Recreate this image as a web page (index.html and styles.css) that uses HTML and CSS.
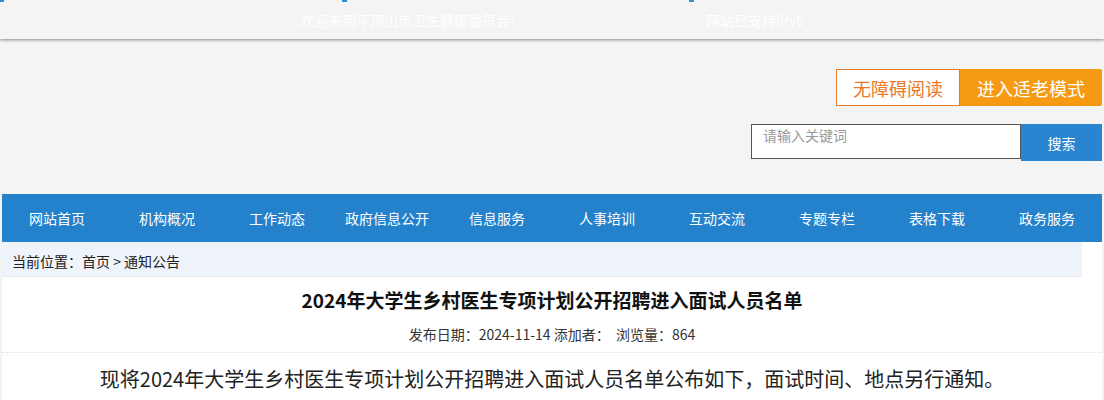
FILE: index.html
```html
<!DOCTYPE html>
<html lang="zh-CN">
<head>
<meta charset="utf-8">
<title>平顶山市卫生健康委员会</title>
<link rel="stylesheet" href="styles.css">
</head>
<body>
<div class="topbar">
  <span class="mark mark-a"></span>
  <span class="mark mark-b"></span>
  <span class="mark mark-c"></span>
  <div class="topbar-inner">
    <span class="welcome">欢迎来到平顶山市卫生健康委员会!</span>
    <span class="ipv6">网站已支持IPv6</span>
  </div>
</div>
<div class="wrap">
  <div class="header">
    <div class="tools">
      <a class="btn-access">无障碍阅读</a>
      <a class="btn-elder">进入适老模式</a>
    </div>
    <div class="search">
      <div class="search-input">请输入关键词</div>
      <a class="search-btn">搜索</a>
    </div>
  </div>
  <ul class="nav">
    <li>网站首页</li>
    <li>机构概况</li>
    <li>工作动态</li>
    <li>政府信息公开</li>
    <li>信息服务</li>
    <li>人事培训</li>
    <li>互动交流</li>
    <li>专题专栏</li>
    <li>表格下载</li>
    <li>政务服务</li>
  </ul>
  <div class="main">
    <div class="crumb">当前位置：首页 &gt; 通知公告</div>
    <h1 class="title">2024年大学生乡村医生专项计划公开招聘进入面试人员名单</h1>
    <div class="meta">发布日期：2024-11-14 添加者：&nbsp; 浏览量：864</div>
    <p class="body-text">现将2024年大学生乡村医生专项计划公开招聘进入面试人员名单公布如下，面试时间、地点另行通知。</p>
  </div>
</div>
</body>
</html>
```
FILE: styles.css
```css
* { box-sizing: border-box; }
html, body { margin: 0; padding: 0; }
body {
  background: #f4f4f4;
  font-family: "Noto Sans CJK SC", "Noto Sans", sans-serif;
  color: #333;
  width: 1104px;
  overflow: hidden;
}
.topbar {
  position: relative;
  height: 39px;
  background: #f4f4f4;
  box-shadow: 0 1px 3px rgba(0,0,0,0.45);
}
.mark {
  position: absolute;
  top: 0;
  height: 2px;
  width: 5px;
  background: #2f8fd0;
}
.mark-a { left: 0; width: 4px; }
.mark-b { left: 342px; }
.mark-c { left: 689px; }
.topbar-inner {
  display: flex;
  align-items: center;
  height: 39px;
  padding-left: 300px;
  font-size: 14px;
  color: #fff;
}
.welcome { width: 406px; }
.wrap {
  width: 1100px;
  margin: 0 auto;
}
.header {
  display: flex;
  flex-direction: column;
  align-items: flex-end;
  padding-top: 30px;
  height: 155px;
}
.tools { display: flex; height: 37px; }
.tools a {
  display: flex;
  align-items: center;
  justify-content: center;
  font-size: 18px;
  height: 37px;
}
.btn-access {
  width: 124px;
  background: #fff;
  border: 1px solid #e8792a;
  color: #e8792a;
}
.btn-elder {
  width: 142px;
  background: #f59a12;
  color: #fff;
  border-radius: 0 2px 2px 0;
}
.search {
  display: flex;
  align-items: flex-start;
  margin-top: 18px;
}
.search-input {
  width: 270px;
  height: 35px;
  border: 1px solid #555;
  background: #fff;
  color: #999;
  font-size: 14px;
  padding: 0 0 0 11px;
  line-height: 20px;
}
.search-btn {
  width: 81px;
  height: 37px;
  background: #2a85d0;
  color: #fff;
  font-size: 14px;
  display: flex;
  align-items: center;
  justify-content: center;
}
.nav {
  list-style: none;
  margin: 0;
  padding: 0;
  display: grid;
  grid-template-columns: repeat(10, 110px);
  height: 48px;
  background: #2482cc;
}
.nav li {
  display: flex;
  align-items: center;
  justify-content: center;
  color: #fff;
  font-size: 14px;
}
.main {
  background: #fff;
  padding-bottom: 30px;
}
.crumb {
  width: 1080px;
  height: 35px;
  background: #eff4fa;
  border-bottom: 1px solid #e9ecef;
  font-size: 14px;
  color: #222;
  padding-left: 10px;
  display: flex;
  align-items: center;
  padding-top: 4px;
}
.title {
  margin: 0;
  text-align: center;
  font-size: 19px;
  font-weight: bold;
  color: #111;
  line-height: 26px;
  padding-top: 10px;
}
.meta {
  text-align: center;
  font-size: 14px;
  color: #333;
  line-height: 20px;
  padding-top: 11px;
  padding-bottom: 8px;
  border-bottom: 1px dotted #ddd;
}
.body-text {
  margin: 0;
  text-align: center;
  font-size: 20px;
  color: #222;
  line-height: 30px;
  padding-top: 11px;
}
```
